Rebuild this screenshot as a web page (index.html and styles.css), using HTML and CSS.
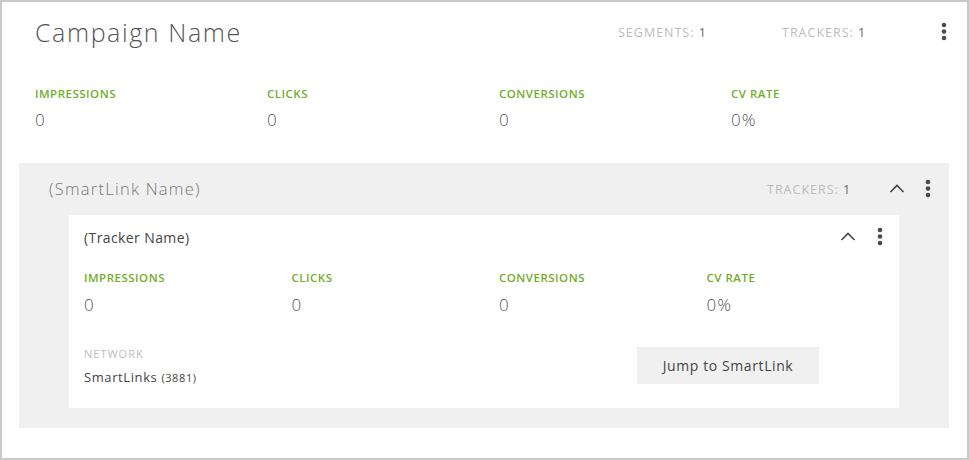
FILE: index.html
```html
<!DOCTYPE html>
<html>
<head>
<meta charset="utf-8">
<link rel="stylesheet" href="styles.css">
</head>
<body>
<div class="frame">
  <div class="head">
    <h1 class="title">Campaign Name</h1>
    <div class="stat stat-seg">SEGMENTS: <b>1</b></div>
    <div class="stat stat-trk">TRACKERS: <b>1</b></div>
    <svg class="kebab" width="20" height="20" viewBox="0 0 20 20"><circle cx="10" cy="3" r="2.3"/><circle cx="10" cy="9.5" r="2.3"/><circle cx="10" cy="16" r="2.3"/></svg>
  </div>
  <div class="metrics metrics-top">
    <div class="metric"><div class="label">IMPRESSIONS</div><div class="value">0</div></div>
    <div class="metric"><div class="label">CLICKS</div><div class="value">0</div></div>
    <div class="metric"><div class="label">CONVERSIONS</div><div class="value">0</div></div>
    <div class="metric"><div class="label">CV RATE</div><div class="value">0%</div></div>
  </div>
  <div class="panel">
    <div class="panel-head">
      <div class="panel-title">(SmartLink Name)</div>
      <div class="stat panel-trk">TRACKERS: <b>1</b></div>
      <svg class="chev" width="20" height="20" viewBox="0 0 20 20"><path d="M3.5 13 L10 6.5 L16.5 13" fill="none" stroke="#444" stroke-width="1.6"/></svg>
      <svg class="kebab kebab-panel" width="20" height="20" viewBox="0 0 20 20"><circle cx="10" cy="3" r="2.3"/><circle cx="10" cy="9.5" r="2.3"/><circle cx="10" cy="16" r="2.3"/></svg>
    </div>
    <div class="card">
      <div class="card-head">
        <div class="card-title">(Tracker Name)</div>
        <svg class="chev chev-card" width="20" height="20" viewBox="0 0 20 20"><path d="M3.5 13 L10 6.5 L16.5 13" fill="none" stroke="#444" stroke-width="1.6"/></svg>
        <svg class="kebab kebab-card" width="20" height="20" viewBox="0 0 20 20"><circle cx="10" cy="3" r="2.3"/><circle cx="10" cy="9.5" r="2.3"/><circle cx="10" cy="16" r="2.3"/></svg>
      </div>
      <div class="metrics metrics-card">
        <div class="metric"><div class="label">IMPRESSIONS</div><div class="value">0</div></div>
        <div class="metric"><div class="label">CLICKS</div><div class="value">0</div></div>
        <div class="metric"><div class="label">CONVERSIONS</div><div class="value">0</div></div>
        <div class="metric"><div class="label">CV RATE</div><div class="value">0%</div></div>
      </div>
      <div class="card-foot">
        <div class="network">
          <div class="net-label">NETWORK</div>
          <div class="net-value">SmartLinks <span class="net-id">(3881)</span></div>
        </div>
        <button class="jump">Jump to SmartLink</button>
      </div>
    </div>
  </div>
</div>
</body>
</html>
```
FILE: styles.css
```css
* { box-sizing: border-box; }
html, body { margin: 0; padding: 0; background: #fff; }
body { font-family: "Open Sans", "Liberation Sans", sans-serif; color: #555; }

.frame {
  width: 969px;
  height: 460px;
  border: 2px solid #c9c9c9;
  background: #fff;
}

.head {
  display: flex;
  align-items: center;
  height: 60px;
  padding-left: 33px;
}
.title {
  margin: 0;
  font-weight: 300;
  font-size: 25px;
  color: #555;
  letter-spacing: 1.6px;
  width: 583px;
}
.stat {
  font-size: 12.5px;
  color: #bcbcbc;
  letter-spacing: 1px;
}
.stat b { color: #666; font-weight: 400; }
.stat-seg { width: 164px; }
.stat-trk { width: 152px; }
.kebab { fill: #4a4a4a; display: block; }

.metrics {
  display: grid;
  grid-template-columns: repeat(4, 232px);
}
.metrics-top {
  margin-top: 25px;
  margin-left: 18px;
}
.metric { padding-left: 15px; }
.label {
  font-size: 11.5px;
  font-weight: 600;
  color: #72ad2a;
  line-height: 14px;
  letter-spacing: 0.5px;
}
.value {
  font-size: 17px;
  font-weight: 300;
  color: #555;
  line-height: 20px;
  margin-top: 9px;
  letter-spacing: 1px;
}

.panel {
  margin: 33px 18px 0 17px;
  background: #f0f0f0;
  padding: 0 0 20px 50px;
}
.panel-head {
  display: flex;
  align-items: center;
  height: 52px;
  margin-left: -50px;
  padding-left: 30px;
}
.panel-title {
  font-size: 16.5px;
  font-weight: 300;
  color: #777;
  letter-spacing: 1.25px;
  width: 718px;
  margin-top: -1px;
}
.panel-trk { width: 120px; }
.chev { display: block; }
.kebab-panel { margin-left: 11px; }

.card {
  width: 830px;
  background: #fff;
  height: 193px;
}
.card-head {
  display: flex;
  align-items: center;
  height: 44px;
  padding-left: 15px;
}
.card-title {
  font-size: 14px;
  color: #444;
  letter-spacing: 0.4px;
  width: 754px;
}
.kebab-card { margin-left: 12px; }
.metrics-card {
  grid-template-columns: repeat(4, 207.5px);
  margin-top: 12px;
}
.metrics-card .value { margin-top: 10px; }

.card-foot {
  display: flex;
  align-items: flex-start;
  padding-left: 15px;
  margin-top: 32px;
}
.network { width: 553px; }
.net-label {
  font-size: 11px;
  color: #bdbdbd;
  line-height: 14px;
  letter-spacing: 1px;
}
.net-value {
  font-size: 13px;
  color: #444;
  margin-top: 7px;
  letter-spacing: 0.6px;
}
.net-id { font-size: 11px; }
.jump {
  width: 182px;
  height: 37px;
  border: 0;
  background: #f0f0f0;
  font-family: inherit;
  font-size: 14px;
  color: #444;
  letter-spacing: 0.6px;
  padding: 0;
}
```
